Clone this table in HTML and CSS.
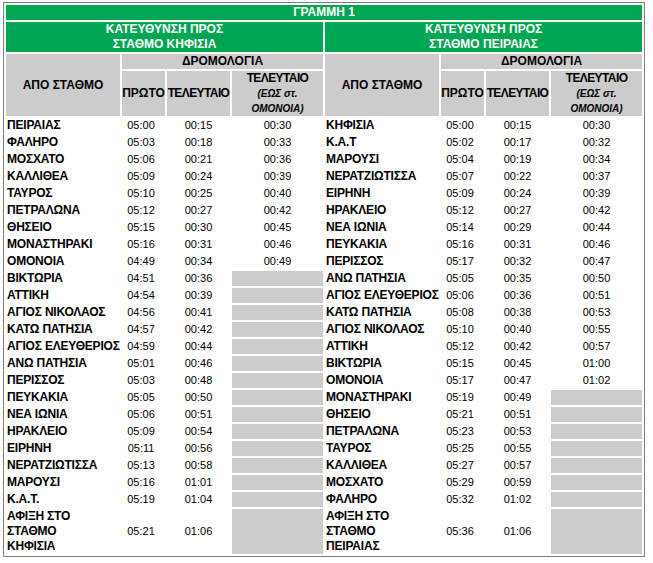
FILE: index.html
```html
<!DOCTYPE html>
<html lang="el">
<head>
<meta charset="utf-8">
<title>ΓΡΑΜΜΗ 1</title>
<link rel="stylesheet" href="styles.css">
</head>
<body>
<table class="tt">
<colgroup>
<col class="cn"><col class="cp"><col class="cl"><col class="co">
<col class="cn"><col class="cp"><col class="cl"><col class="co">
</colgroup>
<tr><td class="g title" colspan="8">ΓΡΑΜΜΗ 1</td></tr>
<tr>
<td class="g dir" colspan="4">ΚΑΤΕΥΘΥΝΣΗ ΠΡΟΣ<br>ΣΤΑΘΜΟ ΚΗΦΙΣΙΑ</td>
<td class="g dir" colspan="4">ΚΑΤΕΥΘΥΝΣΗ ΠΡΟΣ<br>ΣΤΑΘΜΟ ΠΕΙΡΑΙΑΣ</td>
</tr>
<tr>
<td class="h" rowspan="2">ΑΠΟ ΣΤΑΘΜΟ</td><td class="h" colspan="3">ΔΡΟΜΟΛΟΓΙΑ</td>
<td class="h" rowspan="2">ΑΠΟ ΣΤΑΘΜΟ</td><td class="h" colspan="3">ΔΡΟΜΟΛΟΓΙΑ</td>
</tr>
<tr>
<td class="h">ΠΡΩΤΟ</td><td class="h nar">ΤΕΛΕΥΤΑΙΟ</td><td class="h sub"><span class="nar">ΤΕΛΕΥΤΑΙΟ</span><br><i>(ΕΩΣ στ.<br>ΟΜΟΝΟΙΑ)</i></td>
<td class="h">ΠΡΩΤΟ</td><td class="h nar">ΤΕΛΕΥΤΑΙΟ</td><td class="h sub"><span class="nar">ΤΕΛΕΥΤΑΙΟ</span><br><i>(ΕΩΣ στ.<br>ΟΜΟΝΟΙΑ)</i></td>
</tr>
<tr><td class="n">ΠΕΙΡΑΙΑΣ</td><td class="t p">05:00</td><td class="t">00:15</td><td class="t">00:30</td><td class="n">ΚΗΦΙΣΙΑ</td><td class="t p">05:00</td><td class="t">00:15</td><td class="t">00:30</td></tr>
<tr><td class="n">ΦΑΛΗΡΟ</td><td class="t p">05:03</td><td class="t">00:18</td><td class="t">00:33</td><td class="n">Κ.Α.Τ</td><td class="t p">05:02</td><td class="t">00:17</td><td class="t">00:32</td></tr>
<tr><td class="n">ΜΟΣΧΑΤΟ</td><td class="t p">05:06</td><td class="t">00:21</td><td class="t">00:36</td><td class="n">ΜΑΡΟΥΣΙ</td><td class="t p">05:04</td><td class="t">00:19</td><td class="t">00:34</td></tr>
<tr><td class="n">ΚΑΛΛΙΘΕΑ</td><td class="t p">05:09</td><td class="t">00:24</td><td class="t">00:39</td><td class="n">ΝΕΡΑΤΖΙΩΤΙΣΣΑ</td><td class="t p">05:07</td><td class="t">00:22</td><td class="t">00:37</td></tr>
<tr><td class="n">ΤΑΥΡΟΣ</td><td class="t p">05:10</td><td class="t">00:25</td><td class="t">00:40</td><td class="n">ΕΙΡΗΝΗ</td><td class="t p">05:09</td><td class="t">00:24</td><td class="t">00:39</td></tr>
<tr><td class="n">ΠΕΤΡΑΛΩΝΑ</td><td class="t p">05:12</td><td class="t">00:27</td><td class="t">00:42</td><td class="n">ΗΡΑΚΛΕΙΟ</td><td class="t p">05:12</td><td class="t">00:27</td><td class="t">00:42</td></tr>
<tr><td class="n">ΘΗΣΕΙΟ</td><td class="t p">05:15</td><td class="t">00:30</td><td class="t">00:45</td><td class="n">ΝΕΑ ΙΩΝΙΑ</td><td class="t p">05:14</td><td class="t">00:29</td><td class="t">00:44</td></tr>
<tr><td class="n">ΜΟΝΑΣΤΗΡΑΚΙ</td><td class="t p">05:16</td><td class="t">00:31</td><td class="t">00:46</td><td class="n">ΠΕΥΚΑΚΙΑ</td><td class="t p">05:16</td><td class="t">00:31</td><td class="t">00:46</td></tr>
<tr><td class="n">ΟΜΟΝΟΙΑ</td><td class="t p">04:49</td><td class="t">00:34</td><td class="t">00:49</td><td class="n">ΠΕΡΙΣΣΟΣ</td><td class="t p">05:17</td><td class="t">00:32</td><td class="t">00:47</td></tr>
<tr><td class="n">ΒΙΚΤΩΡΙΑ</td><td class="t p">04:51</td><td class="t">00:36</td><td class="e"></td><td class="n">ΑΝΩ ΠΑΤΗΣΙΑ</td><td class="t p">05:05</td><td class="t">00:35</td><td class="t">00:50</td></tr>
<tr><td class="n">ΑΤΤΙΚΗ</td><td class="t p">04:54</td><td class="t">00:39</td><td class="e"></td><td class="n">ΑΓΙΟΣ ΕΛΕΥΘΕΡΙΟΣ</td><td class="t p">05:06</td><td class="t">00:36</td><td class="t">00:51</td></tr>
<tr><td class="n">ΑΓΙΟΣ ΝΙΚΟΛΑΟΣ</td><td class="t p">04:56</td><td class="t">00:41</td><td class="e"></td><td class="n">ΚΑΤΩ ΠΑΤΗΣΙΑ</td><td class="t p">05:08</td><td class="t">00:38</td><td class="t">00:53</td></tr>
<tr><td class="n">ΚΑΤΩ ΠΑΤΗΣΙΑ</td><td class="t p">04:57</td><td class="t">00:42</td><td class="e"></td><td class="n">ΑΓΙΟΣ ΝΙΚΟΛΑΟΣ</td><td class="t p">05:10</td><td class="t">00:40</td><td class="t">00:55</td></tr>
<tr><td class="n">ΑΓΙΟΣ ΕΛΕΥΘΕΡΙΟΣ</td><td class="t p">04:59</td><td class="t">00:44</td><td class="e"></td><td class="n">ΑΤΤΙΚΗ</td><td class="t p">05:12</td><td class="t">00:42</td><td class="t">00:57</td></tr>
<tr><td class="n">ΑΝΩ ΠΑΤΗΣΙΑ</td><td class="t p">05:01</td><td class="t">00:46</td><td class="e"></td><td class="n">ΒΙΚΤΩΡΙΑ</td><td class="t p">05:15</td><td class="t">00:45</td><td class="t">01:00</td></tr>
<tr><td class="n">ΠΕΡΙΣΣΟΣ</td><td class="t p">05:03</td><td class="t">00:48</td><td class="e"></td><td class="n">ΟΜΟΝΟΙΑ</td><td class="t p">05:17</td><td class="t">00:47</td><td class="t">01:02</td></tr>
<tr><td class="n">ΠΕΥΚΑΚΙΑ</td><td class="t p">05:05</td><td class="t">00:50</td><td class="e"></td><td class="n">ΜΟΝΑΣΤΗΡΑΚΙ</td><td class="t p">05:19</td><td class="t">00:49</td><td class="e"></td></tr>
<tr><td class="n">ΝΕΑ ΙΩΝΙΑ</td><td class="t p">05:06</td><td class="t">00:51</td><td class="e"></td><td class="n">ΘΗΣΕΙΟ</td><td class="t p">05:21</td><td class="t">00:51</td><td class="e"></td></tr>
<tr><td class="n">ΗΡΑΚΛΕΙΟ</td><td class="t p">05:09</td><td class="t">00:54</td><td class="e"></td><td class="n">ΠΕΤΡΑΛΩΝΑ</td><td class="t p">05:23</td><td class="t">00:53</td><td class="e"></td></tr>
<tr><td class="n">ΕΙΡΗΝΗ</td><td class="t p">05:11</td><td class="t">00:56</td><td class="e"></td><td class="n">ΤΑΥΡΟΣ</td><td class="t p">05:25</td><td class="t">00:55</td><td class="e"></td></tr>
<tr><td class="n">ΝΕΡΑΤΖΙΩΤΙΣΣΑ</td><td class="t p">05:13</td><td class="t">00:58</td><td class="e"></td><td class="n">ΚΑΛΛΙΘΕΑ</td><td class="t p">05:27</td><td class="t">00:57</td><td class="e"></td></tr>
<tr><td class="n">ΜΑΡΟΥΣΙ</td><td class="t p">05:16</td><td class="t">01:01</td><td class="e"></td><td class="n">ΜΟΣΧΑΤΟ</td><td class="t p">05:29</td><td class="t">00:59</td><td class="e"></td></tr>
<tr><td class="n">Κ.Α.Τ.</td><td class="t p">05:19</td><td class="t">01:04</td><td class="e"></td><td class="n">ΦΑΛΗΡΟ</td><td class="t p">05:32</td><td class="t">01:02</td><td class="e"></td></tr>
<tr><td class="n last">ΑΦΙΞΗ ΣΤΟ<br>ΣΤΑΘΜΟ<br>ΚΗΦΙΣΙΑ</td><td class="t p">05:21</td><td class="t">01:06</td><td class="e"></td><td class="n last">ΑΦΙΞΗ ΣΤΟ<br>ΣΤΑΘΜΟ<br>ΠΕΙΡΑΙΑΣ</td><td class="t p">05:36</td><td class="t">01:06</td><td class="e"></td></tr>
</table>
</body>
</html>
```
FILE: styles.css
```css
html, body {
  margin: 0;
  background: #fff;
}
body {
  padding: 2px 0 0 3px;
  font-family: "Liberation Sans", Arial, sans-serif;
  color: #000;
}
.tt {
  border: 1px solid #7f7f7f;
  border-spacing: 2px;
  border-collapse: separate;
  table-layout: fixed;
  width: 642px;
}
.cn { width: 114px; }
.cp { width: 43px; }
.cl { width: 63px; }
.co { width: 91px; }
.tt td {
  padding: 0;
  vertical-align: middle;
}
.g {
  background: #00a651;
  color: #fff;
  font-weight: bold;
  font-size: 12px;
  line-height: 15px;
  text-align: center;
}
.h {
  background: #cccccc;
  font-weight: bold;
  font-size: 12px;
  line-height: 15px;
  text-align: center;
  white-space: nowrap;
}
.nar {
  letter-spacing: -0.6px;
}
.sub i {
  font-size: 10px;
}
.n {
  font-weight: bold;
  font-size: 12px;
  line-height: 15px;
  letter-spacing: -0.2px;
  padding-left: 1px !important;
  white-space: nowrap;
  text-align: left;
}
.t {
  font-size: 11px;
  line-height: 15px;
  text-align: center;
}
.t.p {
  padding-right: 5px !important;
}
.e {
  background: #cccccc;
}
```
